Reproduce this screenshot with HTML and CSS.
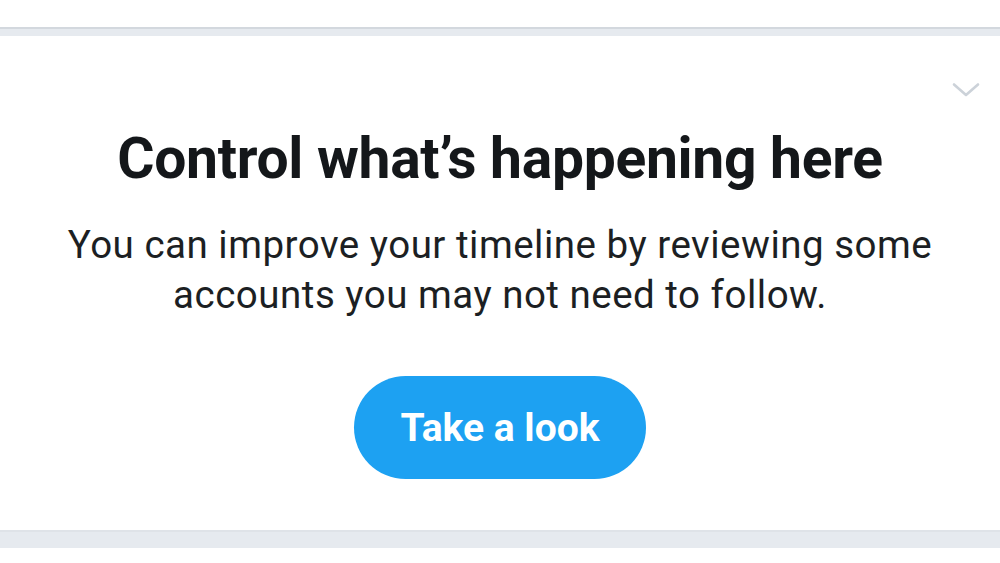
FILE: index.html
```html
<!DOCTYPE html>
<html>
<head>
<meta charset="utf-8">
<link rel="stylesheet" href="styles.css">
</head>
<body>
<div class="top"></div>
<div class="sep sep-top"></div>
<section class="card">
  <svg class="chev" width="28" height="16" viewBox="0 0 28 16"><path d="M2 2.5 L14 13 L26 2.5" fill="none" stroke="#ccd2d9" stroke-width="2.6" stroke-linecap="round" stroke-linejoin="round"/></svg>
  <h1 class="title">Control what’s happening here</h1>
  <p class="desc">You can improve your timeline by reviewing some<br>accounts you may not need to follow.</p>
  <button class="btn">Take a look</button>
</section>
<div class="sep sep-bottom"></div>
<div class="bottom"></div>
</body>
</html>
```
FILE: styles.css
```css
html, body { margin: 0; padding: 0; background: #fff; }
body { width: 1000px; height: 563px; overflow: hidden; font-family: Roboto, "Noto Sans", sans-serif; color: #14171a; }
.top { height: 27px; background: #fff; }
.sep { background: #e6eaef; }
.sep-top { height: 9px; border-top: 2px solid #d3d8de; box-sizing: border-box; }
.card { height: 494px; box-sizing: border-box; padding-top: 90px; display: flex; flex-direction: column; align-items: center; position: relative; }
.chev { position: absolute; top: 46px; right: 20px; }
.title { margin: 0; font-size: 57px; font-weight: 700; letter-spacing: -0.3px; line-height: 66px; }
.desc { margin: 28px 0 0; font-size: 38.5px; font-weight: 400; line-height: 50px; letter-spacing: 0.5px; text-align: center; color: #1c1f23; }
.btn { margin-top: 56px; width: 292px; height: 103px; border: none; border-radius: 52px; background: #1da1f2; color: #fff; font-family: Roboto, sans-serif; font-weight: 700; font-size: 39px; padding: 0; }
.sep-bottom { height: 18px; border-top: 2px solid #dfe3e8; box-sizing: border-box; }
.bottom { height: 15px; background: #fff; }
```
